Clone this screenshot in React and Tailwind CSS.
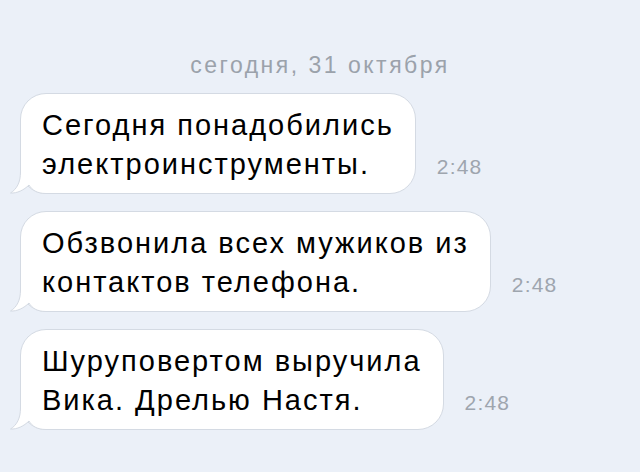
import React from "react";

const messages = [
  { lines: ["Сегодня понадобились", "электроинструменты."], time: "2:48" },
  { lines: ["Обзвонила всех мужиков из", "контактов телефона."], time: "2:48" },
  { lines: ["Шуруповертом выручила", "Вика. Дрелью Настя."], time: "2:48" },
];

const tailEdge =
  "M10.5 0 L10.5 14 C10.5 24 7 31 0.5 35 C7 35.5 14 32 19 27 C22 32 27 35.5 36 35.5 L44 35.5";

function Tail() {
  return (
    <svg
      className="absolute left-[-11px] bottom-[-1px]"
      width="44"
      height="36"
      viewBox="0 0 44 36"
    >
      <path d={tailEdge + " L44 0 Z"} fill="#ffffff" />
      <path d={tailEdge} fill="none" stroke="#d4dae3" strokeWidth="1" />
    </svg>
  );
}

function Bubble({ lines, time }) {
  return (
    <div className="flex items-end gap-[21px]">
      <div className="relative rounded-[26px] border border-[#d4dae3] bg-white pl-[21px] pr-[21px] pt-[12px] pb-[9px]">
        <Tail />
        <div className="relative text-[29px] leading-[39px] tracking-[2px] text-black whitespace-nowrap">
          {lines.map((l, i) => (
            <div key={i}>{l}</div>
          ))}
        </div>
      </div>
      <div className="pb-[17px] text-[21px] leading-[20px] tracking-[1.2px] text-[#9ea5ae]">{time}</div>
    </div>
  );
}

export default function App() {
  return (
    <div
      className="w-[640px] h-[472px] overflow-hidden bg-[#ebf0f8]"
      style={{ fontFamily: '"Liberation Sans", Arial, sans-serif' }}
    >
      <div className="pt-[50px] text-center text-[23px] leading-[30px] tracking-[2.5px] text-[#9ba2ab]">
        сегодня, 31 октября
      </div>
      <div className="mt-[13px] flex flex-col gap-[17px] pl-[20px]">
        {messages.map((m, i) => (
          <Bubble key={i} {...m} />
        ))}
      </div>
    </div>
  );
}
